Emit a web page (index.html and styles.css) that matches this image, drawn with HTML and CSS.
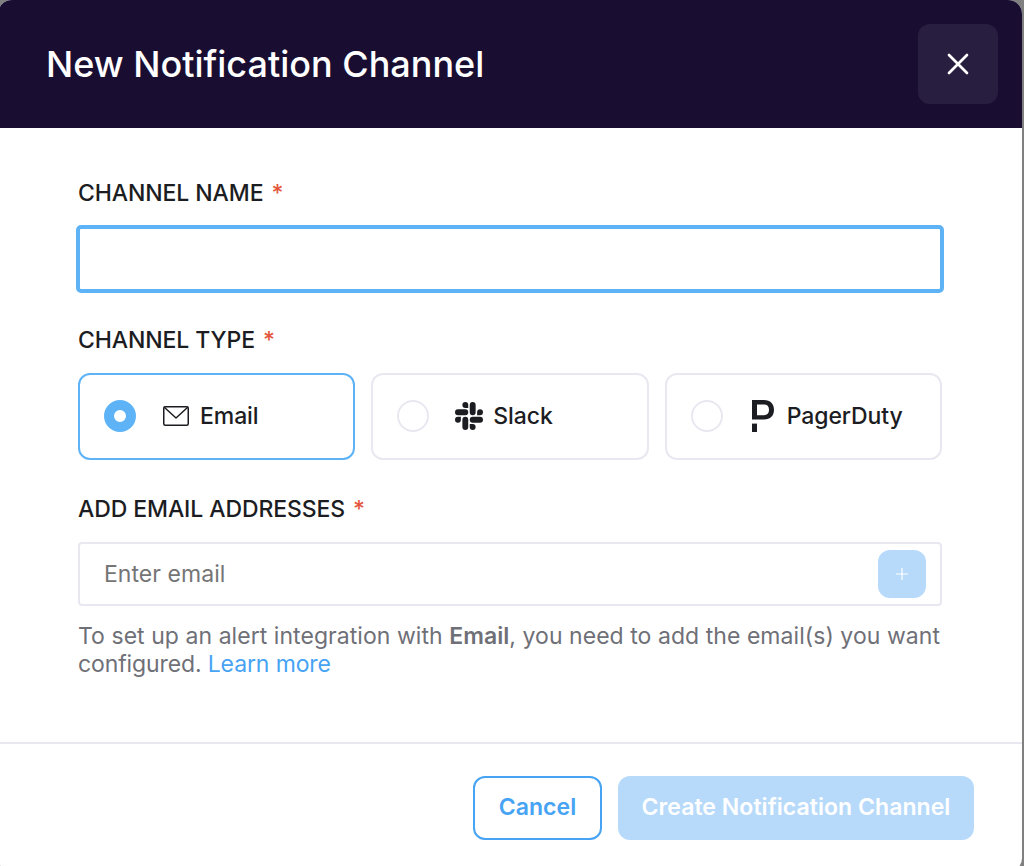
FILE: index.html
```html
<!DOCTYPE html>
<html lang="en">
<head>
<meta charset="utf-8">
<title>New Notification Channel</title>
<link rel="stylesheet" href="styles.css">
</head>
<body>
<div class="modal">
  <header class="header">
    <h1 class="title">New Notification Channel</h1>
    <button class="close" aria-label="Close">
      <svg width="22" height="22" viewBox="0 0 22 22" fill="none" stroke="#fff" stroke-width="2.7" stroke-linecap="round"><path d="M2 2l18 18M20 2L2 20"/></svg>
    </button>
  </header>
  <main class="body">
    <label class="label" for="name">CHANNEL NAME <span class="req">*</span></label>
    <input class="name-input" id="name" type="text">
    <div class="label label-type">CHANNEL TYPE <span class="req">*</span></div>
    <div class="types">
      <div class="type selected">
        <span class="radio"></span>
        <svg class="icon-mail" width="26" height="20" viewBox="0 0 26 20" fill="none" stroke="#1c1d22" stroke-width="1.5" stroke-linejoin="round"><rect x=".75" y=".75" width="24.5" height="18.500" rx="1.5"/><path d="M1 1l12 11L25 1"/></svg>
        <span class="type-name">Email</span>
      </div>
      <div class="type">
        <span class="radio"></span>
        <svg class="icon-slack" width="28" height="28" viewBox="0 0 24 24" fill="#1c1d22"><path d="M5.042 15.165a2.528 2.528 0 0 1-2.52 2.523A2.528 2.528 0 0 1 0 15.165a2.527 2.527 0 0 1 2.522-2.52h2.52v2.52zM6.313 15.165a2.527 2.527 0 0 1 2.521-2.52 2.527 2.527 0 0 1 2.521 2.52v6.313A2.528 2.528 0 0 1 8.834 24a2.528 2.528 0 0 1-2.521-2.522v-6.313zM8.834 5.042a2.528 2.528 0 0 1-2.521-2.52A2.528 2.528 0 0 1 8.834 0a2.528 2.528 0 0 1 2.521 2.522v2.520H8.834zM8.834 6.313a2.528 2.528 0 0 1 2.521 2.521 2.528 2.528 0 0 1-2.521 2.521H2.522A2.528 2.528 0 0 1 0 8.834a2.528 2.528 0 0 1 2.522-2.521h6.312zM18.956 8.834a2.528 2.528 0 0 1 2.522-2.521A2.528 2.528 0 0 1 24 8.834a2.528 2.528 0 0 1-2.522 2.521h-2.522V8.834zM17.688 8.834a2.528 2.528 0 0 1-2.523 2.521 2.527 2.527 0 0 1-2.520-2.521V2.522A2.527 2.527 0 0 1 15.165 0a2.528 2.528 0 0 1 2.523 2.522v6.312zM15.165 18.956a2.528 2.528 0 0 1 2.523 2.522A2.528 2.528 0 0 1 15.165 24a2.527 2.527 0 0 1-2.520-2.522v-2.522h2.520zM15.165 17.688a2.527 2.527 0 0 1-2.520-2.523 2.526 2.526 0 0 1 2.520-2.520h6.313A2.527 2.527 0 0 1 24 15.165a2.528 2.528 0 0 1-2.522 2.523h-6.313z"/></svg>
        <span class="type-name">Slack</span>
      </div>
      <div class="type">
        <span class="radio"></span>
        <svg class="icon-pd" width="22" height="32" viewBox="0 0 22 32" fill="#1c1d22"><rect y="23.6" width="5" height="8.4"/><path fill-rule="evenodd" d="M0 0h12C18.500 0 22 4 22 9.800S18.500 19.600 12 19.600H0zM5 4.600v10.600h7c3.200 0 5-2 5-5.400S15.200 4.600 12 4.600z"/></svg>
        <span class="type-name">PagerDuty</span>
      </div>
    </div>
    <label class="label label-email" for="email">ADD EMAIL ADDRESSES <span class="req">*</span></label>
    <div class="email-box">
      <input class="email-input" id="email" type="text" placeholder="Enter email">
      <button class="add" aria-label="Add email">
        <svg width="12" height="12" viewBox="0 0 12 12" stroke="#fff" stroke-width="1.2"><path d="M6 0v12M0 6h12"/></svg>
      </button>
    </div>
    <p class="help">To set up an alert integration with <b>Email</b>, you need to add the email(s) you want <span class="tail">configured. <a class="link">Learn more</a></span></p>
  </main>
  <footer class="footer">
    <button class="btn cancel">Cancel</button>
    <button class="btn create">Create Notification Channel</button>
  </footer>
</div>
</body>
</html>
```

FILE: styles.css
```css
* { box-sizing: border-box; }
body {
  margin: 0;
  height: 866px;
  overflow: hidden;
  background: #808080;
  font-family: Inter, "Liberation Sans", sans-serif;
  font-size: 23px;
  letter-spacing: 0.05px;
  color: #1c1d22;
}
button { font-family: inherit; letter-spacing: inherit; border: 0; padding: 0; }
.modal {
  display: flex;
  flex-direction: column;
  width: 1024px;
  height: 872px;
  margin-left: -2px;
  border-radius: 14px;
  overflow: hidden;
  background: #fff;
}
.header {
  display: flex;
  align-items: center;
  justify-content: space-between;
  height: 128px;
  padding: 0 24px 0 48px;
  background: #190e32;
}
.title {
  margin: 0;
  font-size: 36px;
  font-weight: 500;
  letter-spacing: 0;
  color: #fff;
}
.close {
  display: flex;
  align-items: center;
  justify-content: center;
  width: 80px;
  height: 80px;
  border-radius: 12px;
  background: #281e3f;
}
.body {
  display: flex;
  flex-direction: column;
  height: 614px;
  padding: 50px 80px 0;
}
.label { height: 30px; line-height: 30px; font-weight: 500; letter-spacing: -0.1px; }
.req { margin-left: 2px; color: #e4573d; }
.name-input {
  height: 68px;
  margin: 17px -2px 0;
  padding: 0 24px;
  border: 4px solid #5eb3f6;
  border-radius: 5px;
  outline: none;
}
.label-type { margin-top: 32px; }
.types {
  display: grid;
  grid-template-columns: repeat(3, 1fr);
  gap: 16px;
  margin-top: 18px;
}
.type {
  display: flex;
  align-items: center;
  height: 87px;
  padding: 0 0 1px 24px;
  border: 2px solid #e9e8f0;
  border-radius: 12px;
}
.radio {
  width: 32px;
  height: 32px;
  border: 2px solid #e9e8f0;
  border-radius: 50%;
}
.selected { border-color: #5eb3f6; }
.selected .radio { border: 10px solid #5eb3f6; }
.type-name { font-weight: 500; letter-spacing: -0.08px; }
.icon-mail { margin: 0 11px 0 27px; }
.icon-slack { margin: 0 10px 0 26px; }
.icon-pd { margin: 0 13px 0 29px; }
.label-email { margin-top: 34px; }
.email-box {
  display: flex;
  align-items: center;
  height: 64px;
  margin-top: 18px;
  padding: 0 14px 0 24px;
  border: 2px solid #e9e8f0;
  border-radius: 4px;
}
.email-input {
  flex: 1;
  padding: 0;
  border: 0;
  outline: none;
  font: inherit;
  letter-spacing: inherit;
}
.email-input::placeholder { color: #757575; }
.add {
  display: flex;
  align-items: center;
  justify-content: center;
  width: 48px;
  height: 48px;
  border-radius: 12px;
  background: #b7dafb;
}
.help {
  margin: 16px -10px 0 0;
  line-height: 28px;
  color: #6f7077;
}
.help b { font-weight: 600; }
.tail { letter-spacing: -0.12px; }
.link { color: #47a3f3; }
.footer {
  display: flex;
  justify-content: flex-end;
  gap: 16px;
  height: 130px;
  padding: 32px 48px 0 0;
  border-top: 2px solid #e9e8f0;
}
.btn {
  height: 64px;
  padding-bottom: 2px;
  border-radius: 12px;
  font-size: 23px;
  font-weight: 600;
}
.cancel { width: 129px; border: 2px solid #47a3f3; background: #fff; color: #47a3f3; }
.create { width: 356px; background: #b7dafb; color: #fff; }
```
